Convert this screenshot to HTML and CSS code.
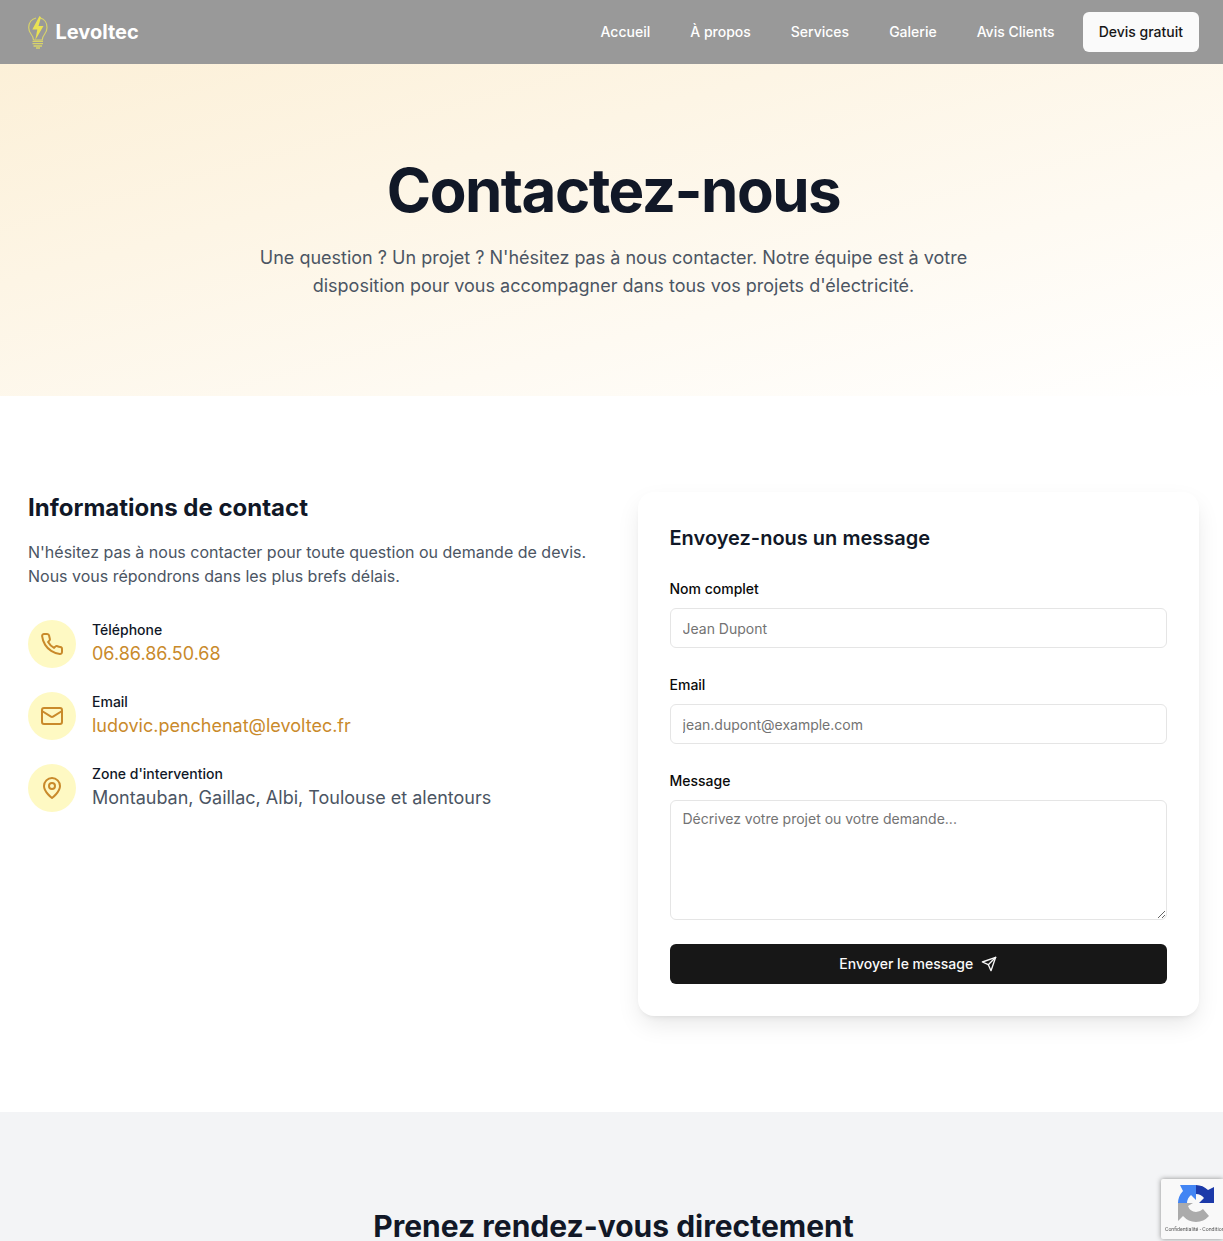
FILE: index.html
```html
<!DOCTYPE html>
<html lang="fr">

<head>
    <meta charset="UTF-8" />
    <meta name="viewport" content="width=device-width, initial-scale=1.0" />
    <title>Levoltec | Contact</title>
    <link rel="stylesheet" href="styles.css">
</head>

<body>
    <nav class="navbar">
        <a class="logo" href="#">
            <svg class="logo-bulb" viewBox="0 0 20 33" width="20" height="33" fill="none">
                <path d="M5.500 24C5.500 21.500 4.500 20 3 18 1.500 16 .7 14 .7 11.500.7 6.500 4 3 8 2M12.500 2.200C16.300 3 19 6.700 19 11.500 19 14 18.200 16 16.700 18 15.200 20 14.200 21.500 14.200 24H5.500" stroke="#d8d36a" stroke-width="1.200" />
                <path d="M11.500 0 4.300 13.500H9.300L7.300 24 15.500 10H10.500L13 1.300Z" fill="#e9e152" />
                <path d="M4.500 25.300H15M4.500 27.700H15M5.500 30H14M8 32H12" stroke="#d8d36a" stroke-width="1.300" />
            </svg>
            <span>Levoltec</span>
        </a>
        <div class="nav-links">
            <a href="#">Accueil</a>
            <a href="#">À propos</a>
            <a href="#">Services</a>
            <a href="#">Galerie</a>
            <a href="#">Avis Clients</a>
            <a class="nav-cta" href="#">Devis gratuit</a>
        </div>
    </nav>

    <header class="hero">
        <h1>Contactez-nous</h1>
        <p>Une question ? Un projet ? N'hésitez pas à nous contacter. Notre équipe est à votre disposition pour vous accompagner dans tous vos projets d'électricité.</p>
    </header>

    <main class="contact">
        <section class="contact-info">
            <h2>Informations de contact</h2>
            <p class="contact-intro">N'hésitez pas à nous contacter pour toute question ou demande de devis. Nous vous répondrons dans les plus brefs délais.</p>

            <div class="info-list">
                <div class="info-item">
                    <div class="info-icon">
                        <svg viewBox="0 0 24 24" width="24" height="24">
                            <path d="M22 16.920v3a2 2 0 0 1-2.180 2 19.790 19.790 0 0 1-8.630-3.070 19.500 19.500 0 0 1-6-6 19.790 19.790 0 0 1-3.070-8.670A2 2 0 0 1 4.110 2h3a2 2 0 0 1 2 1.720 12.840 12.840 0 0 0 .7 2.810 2 2 0 0 1-.45 2.110L8.090 9.910a16 16 0 0 0 6 6l1.270-1.270a2 2 0 0 1 2.110-.45 12.840 12.840 0 0 0 2.810.7A2 2 0 0 1 22 16.920z" />
                        </svg>
                    </div>
                    <div>
                        <div class="info-label">Téléphone</div>
                        <a class="info-value info-link" href="#">06.86.86.50.68</a>
                    </div>
                </div>
                <div class="info-item">
                    <div class="info-icon">
                        <svg viewBox="0 0 24 24" width="24" height="24">
                            <rect x="2" y="4" width="20" height="16" rx="2" />
                            <path d="m22 7-8.970 5.700a1.940 1.940 0 0 1-2.060 0L2 7" />
                        </svg>
                    </div>
                    <div>
                        <div class="info-label">Email</div>
                        <a class="info-value info-link" href="#">ludovic.penchenat@levoltec.fr</a>
                    </div>
                </div>
                <div class="info-item">
                    <div class="info-icon">
                        <svg viewBox="0 0 24 24" width="24" height="24">
                            <path d="M20 10c0 6-8 12-8 12s-8-6-8-12a8 8 0 0 1 16 0Z" />
                            <circle cx="12" cy="10" r="3" />
                        </svg>
                    </div>
                    <div>
                        <div class="info-label">Zone d'intervention</div>
                        <div class="info-value">Montauban, Gaillac, Albi, Toulouse et alentours</div>
                    </div>
                </div>
            </div>
        </section>

        <section class="contact-card">
            <h3>Envoyez-nous un message</h3>
            <form class="contact-form">
                <div class="field">
                    <label for="name">Nom complet</label>
                    <input type="text" id="name" placeholder="Jean Dupont" />
                </div>
                <div class="field">
                    <label for="email">Email</label>
                    <input type="email" id="email" placeholder="jean.dupont@example.com" />
                </div>
                <div class="field">
                    <label for="message">Message</label>
                    <textarea id="message" placeholder="Décrivez votre projet ou votre demande..."></textarea>
                </div>
                <button type="submit">
                    Envoyer le message
                    <svg viewBox="0 0 24 24" width="16" height="16">
                        <path d="m22 2-7 20-4-9-9-4Z" />
                        <path d="M22 2 11 13" />
                    </svg>
                </button>
            </form>
        </section>
    </main>

    <section class="booking">
        <h2>Prenez rendez-vous directement</h2>
    </section>

    <div class="recaptcha">
        <svg viewBox="0 0 38 38" width="38" height="38">
            <path d="M19 1A18 18 0 0 1 31 6L37 3V19H22L27 14A11 11 0 0 0 19 10Z" fill="#1c3aa9" />
            <path d="M1 19A18 18 0 0 1 6 7L3 1H19V16L14 11A11 11 0 0 0 10 19Z" fill="#4285f4" />
            <path d="M19 38A18 18 0 0 0 32 32L26 25A10 10 0 0 1 19 28 9 9 0 0 1 11 22L16 19H1V37L6 32A18 18 0 0 0 19 38Z" fill="#ababab" />
        </svg>
        <div class="recaptcha-text">Confidentialité - Conditions</div>
    </div>
</body>

</html>
```

FILE: styles.css
```css
* {
    box-sizing: border-box;
}

html,
body {
    margin: 0;
    padding: 0;
}

body {
    background-color: #ffffff;
    font-family: Inter, 'Liberation Sans', sans-serif;
    font-size: 16px;
    line-height: 24px;
    color: #111827;
}

a {
    color: inherit;
    text-decoration: none;
}

.navbar {
    height: 64px;
    background-color: #999999;
    display: flex;
    align-items: center;
    justify-content: space-between;
    padding: 0 24px 0 28px;
}

.logo {
    display: flex;
    align-items: center;
    gap: 7.5px;
    color: #ffffff;
    font-size: 20px;
    line-height: 28px;
    font-weight: 700;
}

.nav-links {
    display: flex;
    align-items: center;
    gap: 40px;
    color: #ffffff;
    font-size: 14px;
    font-weight: 500;
}

.nav-cta {
    margin-left: -12px;
    height: 40px;
    padding: 0 16px;
    display: flex;
    align-items: center;
    background: #fafafa;
    border-radius: 6px;
    color: #171717;
}

.hero {
    height: 332px;
    padding: 96px 24px 0 28px;
    text-align: center;
    background: linear-gradient(to bottom right, #fcf0d8 0%, #ffffff 100%);
}

.hero h1 {
    margin: 0 0 24px;
    font-size: 60px;
    line-height: 60px;
    font-weight: 700;
    letter-spacing: -1.5px;
    color: #111827;
}

.hero p {
    max-width: 768px;
    margin: 0 auto;
    font-size: 18px;
    line-height: 28px;
    color: #4b5563;
}

.contact {
    display: grid;
    grid-template-columns: 1fr 1fr;
    gap: 48px;
    padding: 96px 24px 96px 28px;
}

.contact-info h2 {
    margin: 0 0 16px;
    font-size: 24px;
    line-height: 32px;
    font-weight: 700;
    color: #111827;
}

.contact-intro {
    margin: 0 0 32px;
    color: #4b5563;
}

.info-list {
    display: flex;
    flex-direction: column;
    gap: 24px;
}

.info-item {
    display: flex;
    gap: 16px;
}

.info-icon {
    width: 48px;
    height: 48px;
    flex-shrink: 0;
    border-radius: 50%;
    background: #fef9c3;
    display: flex;
    align-items: center;
    justify-content: center;
}

.info-icon svg {
    fill: none;
    stroke: #c98a2b;
    stroke-width: 2;
    stroke-linecap: round;
    stroke-linejoin: round;
}

.info-label {
    font-size: 14px;
    line-height: 20px;
    font-weight: 500;
    color: #111827;
}

.info-value {
    display: block;
    font-size: 18px;
    line-height: 28px;
    color: #4b5563;
}

.info-link {
    color: #c98a2b;
}

.contact-card {
    background: #ffffff;
    border-radius: 16px;
    padding: 32px;
    box-shadow: 0 10px 25px -3px rgba(0, 0, 0, 0.1), 0 4px 6px -4px rgba(0, 0, 0, 0.1);
}

.contact-card h3 {
    margin: 0 0 24px;
    font-size: 20px;
    line-height: 28px;
    font-weight: 600;
    color: #111827;
}

.contact-form {
    display: flex;
    flex-direction: column;
    gap: 24px;
}

.field label {
    display: block;
    margin-bottom: 6px;
    font-size: 14px;
    line-height: 26px;
    font-weight: 500;
    color: #0a0a0a;
}

.field input,
.field textarea {
    display: block;
    width: 100%;
    padding: 8px 12px;
    border: 1px solid #e5e5e5;
    border-radius: 6px;
    background: #ffffff;
    font-family: inherit;
    font-size: 14px;
    line-height: 20px;
}

.field input {
    height: 40px;
}

.field textarea {
    height: 120px;
}

.field input::placeholder,
.field textarea::placeholder {
    color: #737373;
}

.contact-form button {
    height: 40px;
    border: none;
    border-radius: 6px;
    background-color: #171717;
    color: #fafafa;
    font-family: inherit;
    font-size: 14px;
    line-height: 20px;
    font-weight: 500;
    display: flex;
    align-items: center;
    justify-content: center;
    gap: 8px;
}

.contact-form button svg {
    fill: none;
    stroke: currentColor;
    stroke-width: 2;
    stroke-linecap: round;
    stroke-linejoin: round;
}

.booking {
    height: 129px;
    overflow: hidden;
    padding: 96px 24px 0 28px;
    background: #f3f4f6;
    text-align: center;
}

.booking h2 {
    margin: 0;
    font-size: 30px;
    line-height: 36px;
    font-weight: 700;
    color: #111827;
}

.recaptcha {
    position: fixed;
    right: 0;
    bottom: 2px;
    width: 62px;
    height: 60px;
    overflow: hidden;
    padding-top: 5px;
    background: #f9f9f9;
    border-radius: 2px 0 0 2px;
    box-shadow: 0 0 5px rgba(128, 128, 128, 0.9);
}

.recaptcha svg {
    display: block;
    margin-left: 16px;
}

.recaptcha-text {
    position: absolute;
    left: 4px;
    top: 45px;
    white-space: nowrap;
    font-family: Roboto, 'Liberation Sans', sans-serif;
    font-size: 5.2px;
    line-height: 10px;
    color: #555555;
}
```
